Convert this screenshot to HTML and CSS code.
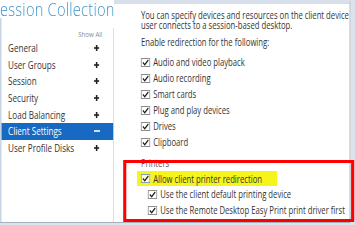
FILE: index.html
```html
<!DOCTYPE html>
<html>
<head>
<meta charset="utf-8">
<link rel="stylesheet" href="styles.css">
</head>
<body>
<div class="page">
  <aside class="nav">
    <div class="title">ession Collection</div>
    <div class="nav-body">
      <div class="nav-panel">
        <div class="show-all">Show All</div>
        <ul class="nav-list">
          <li class="nav-item"><span>General</span><svg class="plus" viewBox="0 0 7 6"><rect x="0" y="2.2" width="7" height="1.6"/><rect x="2.5" y="0" width="2" height="6"/></svg></li>
          <li class="nav-item"><span>User Groups</span><svg class="plus" viewBox="0 0 7 6"><rect x="0" y="2.2" width="7" height="1.6"/><rect x="2.5" y="0" width="2" height="6"/></svg></li>
          <li class="nav-item"><span>Session</span><svg class="plus" viewBox="0 0 7 6"><rect x="0" y="2.2" width="7" height="1.6"/><rect x="2.5" y="0" width="2" height="6"/></svg></li>
          <li class="nav-item"><span>Security</span><svg class="plus" viewBox="0 0 7 6"><rect x="0" y="2.2" width="7" height="1.6"/><rect x="2.5" y="0" width="2" height="6"/></svg></li>
          <li class="nav-item"><span>Load Balancing</span><svg class="plus" viewBox="0 0 7 6"><rect x="0" y="2.2" width="7" height="1.6"/><rect x="2.5" y="0" width="2" height="6"/></svg></li>
          <li class="nav-item active"><span>Client Settings</span><svg class="minus" viewBox="0 0 8 2"><rect x="0" y="0.2" width="8" height="1.6"/></svg></li>
          <li class="nav-item"><span>User Profile Disks</span><svg class="plus" viewBox="0 0 7 6"><rect x="0" y="2.2" width="7" height="1.6"/><rect x="2.5" y="0" width="2" height="6"/></svg></li>
        </ul>
      </div>
    </div>
  </aside>
  <main class="content">
    <p class="intro">You can specify devices and resources on the client device<br>user connects to a session-based desktop.</p>
    <p class="heading">Enable redirection for the following:</p>
    <ul class="checks">
      <li class="check"><span class="cb"><svg viewBox="0 0 10 7"><path d="M1.6 3.5 L4 5.8 L8.6 1"/></svg></span>Audio and video playback</li>
      <li class="check"><span class="cb"><svg viewBox="0 0 10 7"><path d="M1.6 3.5 L4 5.8 L8.6 1"/></svg></span>Audio recording</li>
      <li class="check"><span class="cb"><svg viewBox="0 0 10 7"><path d="M1.6 3.5 L4 5.8 L8.6 1"/></svg></span>Smart cards</li>
      <li class="check"><span class="cb"><svg viewBox="0 0 10 7"><path d="M1.6 3.5 L4 5.8 L8.6 1"/></svg></span>Plug and play devices</li>
      <li class="check"><span class="cb"><svg viewBox="0 0 10 7"><path d="M1.6 3.5 L4 5.8 L8.6 1"/></svg></span>Drives</li>
      <li class="check"><span class="cb"><svg viewBox="0 0 10 7"><path d="M1.6 3.5 L4 5.8 L8.6 1"/></svg></span>Clipboard</li>
    </ul>
    <p class="section">Printers</p>
    <div class="allow"><span class="cb focus"><svg viewBox="0 0 10 7"><path d="M1.6 3.5 L4 5.8 L8.6 1"/></svg></span>Allow client printer redirection</div>
    <ul class="checks sub">
      <li class="check"><span class="cb"><svg viewBox="0 0 10 7"><path d="M1.6 3.5 L4 5.8 L8.6 1"/></svg></span>Use the client default printing device</li>
      <li class="check"><span class="cb"><svg viewBox="0 0 10 7"><path d="M1.6 3.5 L4 5.8 L8.6 1"/></svg></span>Use the Remote Desktop Easy Print print driver first</li>
    </ul>
  </main>
  <div class="annot"></div>
</div>
</body>
</html>
```
FILE: styles.css
```css
html, body {
  margin: 0;
  padding: 0;
}
body {
  width: 355px;
  height: 225px;
  overflow: hidden;
  background: #dbe3ee;
}
.page {
  position: relative;
  width: 461px;
  height: 225px;
  display: flex;
  align-items: flex-start;
  transform: scaleX(0.77);
  transform-origin: 0 0;
  font-family: "Open Sans", "Noto Sans", sans-serif;
  color: #333;
}
.nav {
  width: 148px;
  height: 223px;
  box-sizing: border-box;
  display: flex;
  flex-direction: column;
  background: #fff;
  border-bottom: 1px solid #a8b0bc;
  flex: none;
}
.title {
  position: relative;
  z-index: 1;
  margin-top: 1px;
  height: 17px;
  line-height: 17px;
  font-size: 19px;
  font-weight: 300;
  letter-spacing: 0.3px;
  color: #3f94cb;
  white-space: nowrap;
}
.nav-body {
  flex: 1;
  margin-top: 0;
  padding-top: 10px;
  display: flex;
  flex-direction: column;
  border-left: 2px solid #c8d5e6;
}
.nav-panel {
  flex: 1;
  border-right: 1px solid #d4d4d4;
}
.show-all {
  height: 12px;
  line-height: 12px;
  font-size: 8px;
  color: #8a8a8a;
  text-align: right;
  padding-right: 14px;
}
.nav-list {
  list-style: none;
  margin: 0;
  padding: 0;
}
.nav-item {
  height: 16.6px;
  display: flex;
  align-items: center;
  justify-content: space-between;
  padding: 0 18px 0 8.5px;
  font-size: 10.5px;
  color: #333;
}
.nav-item.active {
  background: #1769c1;
  color: #fff;
}
.plus {
  width: 7px;
  height: 6px;
  fill: #222;
}
.minus {
  width: 8px;
  height: 2px;
  fill: #fff;
  margin-right: -0.5px;
}
.content {
  flex: 1;
  height: 223px;
  box-sizing: border-box;
  margin-right: 6px;
  background: #fff;
  border-top: 4px solid #d6dfea;
  border-right: 1px solid #a9a9a9;
  border-bottom: 1px solid #a8b0bc;
  padding: 6px 0 0 35px;
  font-size: 10px;
  line-height: 10px;
  color: #333;
  white-space: nowrap;
  overflow: hidden;
}
.intro, .heading, .section {
  margin: 0;
}
.heading {
  margin-top: 7px;
}
.checks {
  list-style: none;
  margin: 7px 0 0;
  padding: 0;
}
.check {
  height: 16px;
  display: flex;
  align-items: center;
  gap: 4px;
}
.section {
  margin-top: 8px;
  color: #555;
}
.cb {
  flex: none;
  width: 12px;
  height: 9px;
  box-sizing: border-box;
  border-style: solid;
  border-color: #8e8e8e;
  border-width: 1px 1.3px;
  background: #fff;
  display: flex;
}
.cb svg {
  width: 100%;
  height: 100%;
  fill: none;
  stroke: #1a1a1a;
  stroke-width: 1.5;
}
.cb.focus {
  border-color: #7f9fc8;
  background: #fbfbd8;
}
.allow {
  display: inline-flex;
  align-items: center;
  gap: 4px;
  height: 15px;
  margin: 3px 0 0 -5px;
  padding: 0 20px 0 5px;
  background: #f5f51c;
}
.checks.sub {
  margin-top: 0;
  padding-left: 9px;
}
.annot {
  position: absolute;
  left: 160px;
  top: 160px;
  width: 300px;
  height: 62px;
  box-sizing: border-box;
  border: solid #f00;
  border-width: 3px 4px;
}
```
